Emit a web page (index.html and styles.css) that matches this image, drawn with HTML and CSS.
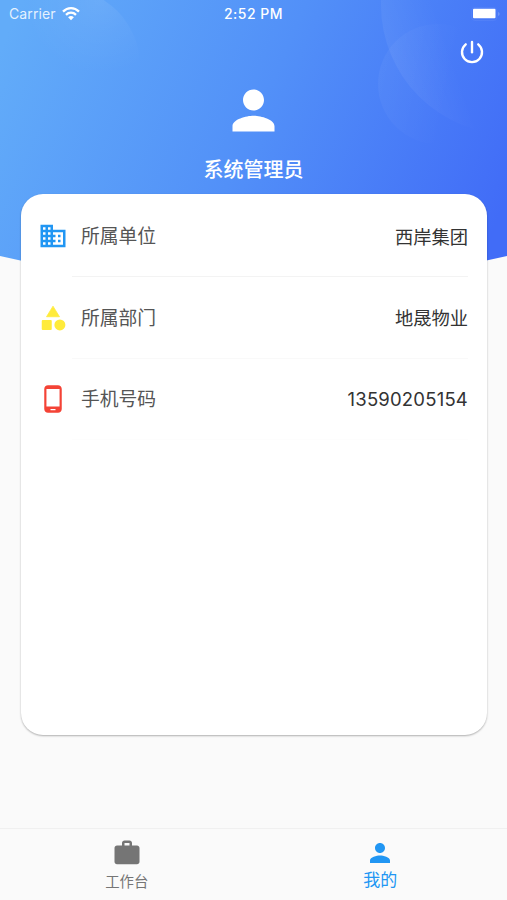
FILE: index.html
```html
<!DOCTYPE html>
<html lang="zh-CN">
<head>
    <meta charset="UTF-8">
    <meta name="viewport" content="width=device-width, initial-scale=1.0">
    <title>我的</title>
    <link rel="stylesheet" href="styles.css">
</head>
<body>
    <div class="page">
        <!-- Header background -->
        <svg class="backdrop" width="507" height="280" viewBox="0 0 507 280">
            <defs>
                <linearGradient id="sky" gradientUnits="userSpaceOnUse" x1="0" y1="50" x2="480" y2="260">
                    <stop offset="0" stop-color="#62acf9"/>
                    <stop offset="0.5" stop-color="#5290f8"/>
                    <stop offset="1" stop-color="#416cf7"/>
                </linearGradient>
                <radialGradient id="bubble-left" gradientUnits="userSpaceOnUse" cx="100" cy="0" r="75">
                    <stop offset="0" stop-color="#fff" stop-opacity="0.08"/>
                    <stop offset="0.4" stop-color="#fff" stop-opacity="0.04"/>
                    <stop offset="1" stop-color="#fff" stop-opacity="0"/>
                </radialGradient>
                <linearGradient id="bubble-top" gradientUnits="userSpaceOnUse" x1="382" y1="40" x2="440" y2="20">
                    <stop offset="0" stop-color="#fff" stop-opacity="0.06"/>
                    <stop offset="1" stop-color="#fff" stop-opacity="0"/>
                </linearGradient>
                <linearGradient id="bubble-right" gradientUnits="userSpaceOnUse" x1="378" y1="75" x2="450" y2="90">
                    <stop offset="0" stop-color="#fff" stop-opacity="0.04"/>
                    <stop offset="1" stop-color="#fff" stop-opacity="0"/>
                </linearGradient>
            </defs>
            <path d="M0 0H507V256Q253 316 0 256Z" fill="url(#sky)"/>
            <circle cx="62" cy="66" r="78" fill="url(#bubble-left)"/>
            <circle cx="510" cy="5" r="129" fill="url(#bubble-top)"/>
            <circle cx="438" cy="84" r="60" fill="url(#bubble-right)"/>
        </svg>

        <div class="content">
            <div class="status-bar">
                <div class="carrier">
                    <span>Carrier</span>
                    <svg width="18" height="14" viewBox="0 0 18 14" fill="none" stroke="#fff" stroke-width="2.3">
                        <path d="M1 4.6C5.6 0 12.4 0 17 4.6"/>
                        <path d="M4 7.8C6.9 5 11.1 5 14 7.8"/>
                        <path d="M9 13.2L6.1 10.2Q9 7.8 11.9 10.2Z" fill="#fff" stroke="none"/>
                    </svg>
                </div>
                <span class="time">2:52 PM</span>
                <svg class="battery" width="30" height="14" viewBox="0 0 30 14">
                    <rect x=".5" y=".5" width="25.5" height="13" rx="3.5" fill="none" stroke="#fff" stroke-opacity=".06"/>
                    <rect x="2" y="1.8" width="22.5" height="9.4" rx="1" fill="#fff"/>
                    <path d="M27.3 5v4c1.6-.7 1.6-3.3 0-4z" fill="#fff" fill-opacity=".3"/>
                </svg>
            </div>

            <div class="toolbar">
                <svg class="icon" viewBox="0 0 24 24" fill="none" stroke="#fff" stroke-width="1.9" stroke-linecap="round">
                    <path d="M12 4v8.2"/>
                    <path d="M7 5.9a8 8 0 1 0 10 0"/>
                </svg>
            </div>

            <div class="user">
                <svg class="avatar" viewBox="0 0 24 24">
                    <path d="M12 12c2.21 0 4-1.79 4-4s-1.79-4-4-4-4 1.79-4 4 1.79 4 4 4zm0 2c-2.67 0-8 1.34-8 4v2h16v-2c0-2.66-5.33-4-8-4z"/>
                </svg>
                <div class="user-name">系统管理员</div>
            </div>

            <div class="card">
                <div class="row">
                    <svg class="icon blue" viewBox="0 0 24 24">
                        <path d="M12 7V3H2v18h20V7H12zM6 19H4v-2h2v2zm0-4H4v-2h2v2zm0-4H4V9h2v2zm0-4H4V5h2v2zm4 12H8v-2h2v2zm0-4H8v-2h2v2zm0-4H8V9h2v2zm0-4H8V5h2v2zm10 12h-8v-2h2v-2h-2v-2h2v-2h-2V9h8v10zm-2-8h-2v2h2v-2zm0 4h-2v2h2v-2z"/>
                    </svg>
                    <div class="row-body">
                        <span class="label">所属单位</span>
                        <span class="value">西岸集团</span>
                    </div>
                </div>
                <div class="row">
                    <svg class="icon yellow" viewBox="0 0 24 24">
                        <path d="M12 2.5l-5.2 8.5h10.4z" stroke="#ffeb3b" stroke-width=".6" stroke-linejoin="round"/>
                        <circle cx="17.5" cy="17.5" r="4.4"/>
                        <rect x="3" y="13.5" width="8" height="8" rx=".8"/>
                    </svg>
                    <div class="row-body faint">
                        <span class="label">所属部门</span>
                        <span class="value">地晟物业</span>
                    </div>
                </div>
                <div class="row">
                    <svg class="icon red" viewBox="0 0 24 24">
                        <path d="M16 1H8C6.34 1 5 2.34 5 4v16c0 1.66 1.34 3 3 3h8c1.66 0 3-1.34 3-3V4c0-1.66-1.34-3-3-3zm-2 20h-4v-1h4v1zm3.25-3H6.75V4h10.5v14z"/>
                    </svg>
                    <div class="row-body fainter">
                        <span class="label">手机号码</span>
                        <span class="value phone">13590205154</span>
                    </div>
                </div>
            </div>

            <div class="tab-bar">
                <div class="tab">
                    <svg class="icon" viewBox="0 0 24 24">
                        <path d="M20 6h-4V4c0-1.11-.89-2-2-2h-4c-1.11 0-2 .89-2 2v2H4c-1.11 0-1.99.89-1.99 2L2 19c0 1.11.89 2 2 2h16c1.11 0 2-.89 2-2V8c0-1.11-.89-2-2-2zm-6 0h-4V4h4v2z"/>
                    </svg>
                    <span>工作台</span>
                </div>
                <div class="tab active">
                    <svg class="icon" viewBox="0 0 24 24">
                        <path d="M12 12c2.21 0 4-1.79 4-4s-1.79-4-4-4-4 1.79-4 4 1.79 4 4 4zm0 2c-2.67 0-8 1.34-8 4v2h16v-2c0-2.66-5.33-4-8-4z"/>
                    </svg>
                    <span>我的</span>
                </div>
            </div>
        </div>
    </div>
</body>
</html>
```

FILE: styles.css
```css
* {
    box-sizing: border-box;
}
body {
    margin: 0;
    background-color: #fafafa;
    font-family: Inter, "Noto Sans CJK SC", sans-serif;
}
.page {
    display: grid;
    width: 507px;
    height: 900px;
    overflow: hidden;
}
.backdrop, .content {
    grid-area: 1 / 1;
}
.content {
    display: flex;
    flex-direction: column;
    height: 900px;
    z-index: 1;
}
svg {
    display: block;
    flex: none;
}
.icon {
    width: 30px;
    height: 30px;
}
.status-bar {
    display: grid;
    grid-template-columns: 1fr auto 1fr;
    align-items: center;
    height: 27px;
    padding: 0 6px 0 9px;
    color: #fff;
    font-size: 14px;
    line-height: 28px;
}
.carrier {
    display: flex;
    align-items: center;
    gap: 6px;
    color: rgba(255, 255, 255, 0.85);
    letter-spacing: 0.1px;
}
.time {
    margin-right: 3px;
    font-size: 14px;
    font-weight: 500;
    letter-spacing: 0.5px;
}
.battery {
    justify-self: end;
}
.toolbar {
    display: flex;
    justify-content: flex-end;
    height: 51px;
    padding: 10px 20px 0 0;
}
.user {
    display: flex;
    flex-direction: column;
    align-items: center;
    height: 115.5px;
    color: #fff;
}
.avatar {
    width: 63px;
    height: 63px;
    margin-top: 0.5px;
    fill: #fff;
}
.user-name {
    margin-top: 13px;
    font-size: 20px;
    font-weight: 500;
    line-height: 30px;
}
.card {
    height: 541.5px;
    margin: 0 20px 0 21px;
    padding: 2px 19px 0 17px;
    background-color: #fff;
    border-radius: 22px;
    box-shadow: 0 1px 2px rgba(0, 0, 0, 0.3);
}
.row {
    display: flex;
    align-items: center;
    height: 81.5px;
}
.row-body {
    display: flex;
    flex: 1;
    align-items: center;
    justify-content: space-between;
    height: 100%;
    margin-left: 4px;
    padding-left: 9px;
    border-bottom: 1px solid #f3f3f3;
}
.faint {
    border-color: #f9f9f9;
}
.fainter {
    border-color: #fdfdfd;
}
.label {
    margin-bottom: 2px;
    color: #555;
    font-size: 18.8px;
}
.value {
    color: #333;
    font-size: 18.3px;
}
.phone {
    font-size: 18.5px;
    letter-spacing: 0.2px;
}
.blue {
    fill: #2196f3;
}
.yellow {
    fill: #ffeb3b;
}
.red {
    fill: #f44336;
}
.tab-bar {
    display: flex;
    height: 72px;
    margin-top: auto;
    padding-top: 9px;
    border-top: 1px solid #f0f0f0;
}
.tab {
    display: flex;
    flex: 1;
    flex-direction: column;
    align-items: center;
    color: #757575;
    fill: #757575;
    font-size: 14.4px;
    line-height: 27px;
}
.active {
    color: #2196f3;
    fill: #2196f3;
    font-size: 17px;
    line-height: 24px;
}
```
